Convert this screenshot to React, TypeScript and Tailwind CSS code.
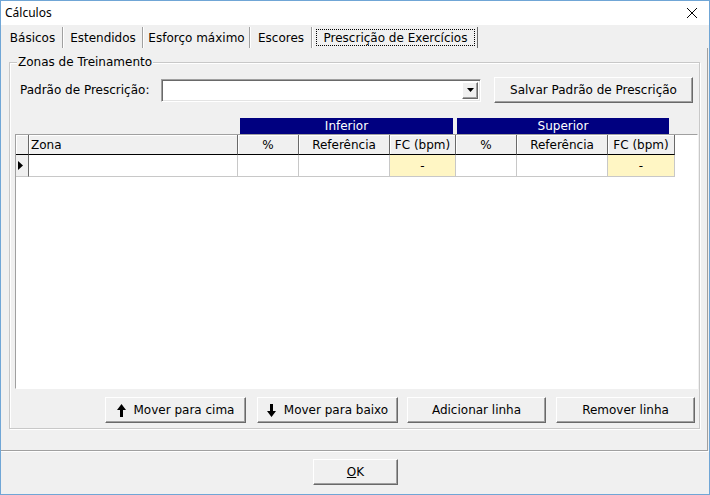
import React from "react";

// Classic raised 3D edge used by buttons and grid headers
const raised =
  "border border-t-white border-l-white border-r-[#696969] border-b-[#696969] shadow-[inset_-1px_-1px_0_#a0a0a0]";
const sunken =
  "border border-t-[#a0a0a0] border-l-[#a0a0a0] border-r-white border-b-white shadow-[inset_1px_1px_0_#696969,inset_-1px_-1px_0_#e3e3e3]";

type Col = { label: string; w: string; left?: boolean; yellow?: boolean };

const COLS: Col[] = [
  { label: "Zona", w: "w-[209px]", left: true },
  { label: "%", w: "w-[61px]" },
  { label: "Referência", w: "w-[91px]" },
  { label: "FC (bpm)", w: "w-[66px]", yellow: true },
  { label: "%", w: "w-[61px]" },
  { label: "Referência", w: "w-[91px]" },
  { label: "FC (bpm)", w: "w-[67px]", yellow: true },
];

function Arrow({ down }: { down?: boolean }) {
  return (
    <svg width="9" height="13" viewBox="0 0 9 13" className={down ? "rotate-180" : ""}>
      <path d="M4.5 0 L9 6 L6 6 L6 13 L3 13 L3 6 L0 6 Z" fill="#000" />
    </svg>
  );
}

function Button({ className, children }: { className: string; children: React.ReactNode }) {
  return (
    <div className={`${raised} ${className} h-[26px] bg-[#f0f0f0] flex items-center justify-center gap-[8px]`}>
      {children}
    </div>
  );
}

export default function App() {
  const tabs = [
    { label: "Básicos", w: "w-[59px]" },
    { label: "Estendidos", w: "w-[78px]" },
    { label: "Esforço máximo", w: "w-[105px]" },
    { label: "Escores", w: "w-[60px]" },
  ];

  return (
    <div className="w-[710px] h-[495px] border border-[#70a6d6] flex flex-col bg-[#f0f0f0] overflow-hidden font-['DejaVu_Sans',sans-serif] text-[12px] text-black">
      {/* Title bar */}
      <div className="h-[24px] bg-white flex items-center justify-between pl-[4px] pr-[12px]">
        <span className="font-['Noto_Sans',sans-serif] text-[12px]">Cálculos</span>
        <svg width="10" height="10" viewBox="0 0 10 10">
          <path d="M0 0 L10 10 M10 0 L0 10" stroke="#000" strokeWidth="1" />
        </svg>
      </div>

      {/* Tabs */}
      <div className="mt-[2px] h-[21px] flex pl-[2px]">
        {tabs.map((t) => (
          <div key={t.label} className="flex">
            <div className={`${t.w} h-full flex items-center justify-center`}>{t.label}</div>
            <div className="w-[1px] h-full bg-[#a0a0a0]" />
            <div className="w-[1px] h-full bg-white" />
          </div>
        ))}
        <div className="ml-[1px] w-[164px] h-full flex border-r border-[#696969]">
          <div className="m-[2px] flex-1 border border-dotted border-black flex items-center justify-center">
            Prescrição de Exercícios
          </div>
        </div>
      </div>

      {/* Tab page */}
      <div className="w-[707px] h-[403px] border-r border-b border-[#a0a0a0] pt-[14px] pl-[8px]">
        <div className="relative w-[691px] h-[367px] border border-[#c8c8c8] shadow-[inset_1px_1px_0_white,1px_1px_0_white]">
          <span className="absolute -top-[8px] left-[7px] px-[1px] bg-[#f0f0f0] leading-[14px]">
            Zonas de Treinamento
          </span>

          {/* Pattern row */}
          <div className="mt-[14px] h-[26px] flex items-center pl-[10px]">
            <span className="w-[141px]">Padrão de Prescrição:</span>
            <div className={`${sunken} w-[320px] h-[23px] bg-white flex justify-end items-center pr-[2px]`}>
              <div className={`${raised} w-[16px] h-[17px] bg-[#f0f0f0] flex items-center justify-center`}>
                <svg width="7" height="4" viewBox="0 0 7 4">
                  <path d="M0 0 L7 0 L3.5 4 Z" fill="#000" />
                </svg>
              </div>
            </div>
            <Button className="ml-[13px] w-[199px] h-[25px]">Salvar Padrão de Prescrição</Button>
          </div>

          {/* Band headers */}
          <div className="mt-[15px] h-[16px] flex pl-[230px] gap-[4px] text-white">
            <div className="w-[213px] bg-[#000080] flex items-center justify-center">Inferior</div>
            <div className="w-[212px] bg-[#000080] flex items-center justify-center">Superior</div>
          </div>

          {/* Grid */}
          <div className="ml-[5px] w-[683px] h-[255px] bg-white border border-t-[#a0a0a0] border-l-[#a0a0a0] border-r-white border-b-white">
            <div className="flex h-[20px]">
              <div className="w-[13px] bg-[#f0f0f0] border-r border-b border-r-[#696969] border-b-black shadow-[inset_1px_1px_0_white]" />
              {COLS.map((c, i) => (
                <div
                  key={i}
                  className={`${c.w} bg-[#f0f0f0] border-r border-b border-r-[#696969] border-b-black shadow-[inset_1px_1px_0_white] flex items-center ${
                    c.left ? "pl-[2px]" : "justify-center"
                  }`}
                >
                  {c.label}
                </div>
              ))}
            </div>
            <div className="flex h-[22px]">
              <div className="w-[13px] bg-[#f0f0f0] border-r border-b border-r-[#696969] border-b-[#c8c8c8] flex items-center pl-[2px]">
                <svg width="5" height="9" viewBox="0 0 5 9">
                  <path d="M0 0 L5 4.5 L0 9 Z" fill="#000" />
                </svg>
              </div>
              {COLS.map((c, i) => (
                <div
                  key={i}
                  className={`${c.w} border-r border-b border-[#c8c8c8] flex items-center justify-center ${
                    c.yellow ? "bg-[#fff6c4]" : "bg-white"
                  }`}
                >
                  {c.yellow ? "-" : ""}
                </div>
              ))}
            </div>
          </div>

          {/* Row action buttons */}
          <div className="mt-[8px] flex pl-[95px]">
            <Button className="w-[141px]">
              <Arrow />
              <span>Mover para cima</span>
            </Button>
            <Button className="ml-[11px] w-[141px]">
              <Arrow down />
              <span>Mover para baixo</span>
            </Button>
            <Button className="ml-[9px] w-[139px]">Adicionar linha</Button>
            <Button className="ml-[10px] w-[139px]">Remover linha</Button>
          </div>
        </div>
      </div>

      {/* Bottom panel */}
      <div className="flex-1 border-t border-white pt-[7px] pl-[312px]">
        <Button className="w-[85px]">
          <span>
            <span className="underline">O</span>K
          </span>
        </Button>
      </div>
    </div>
  );
}
